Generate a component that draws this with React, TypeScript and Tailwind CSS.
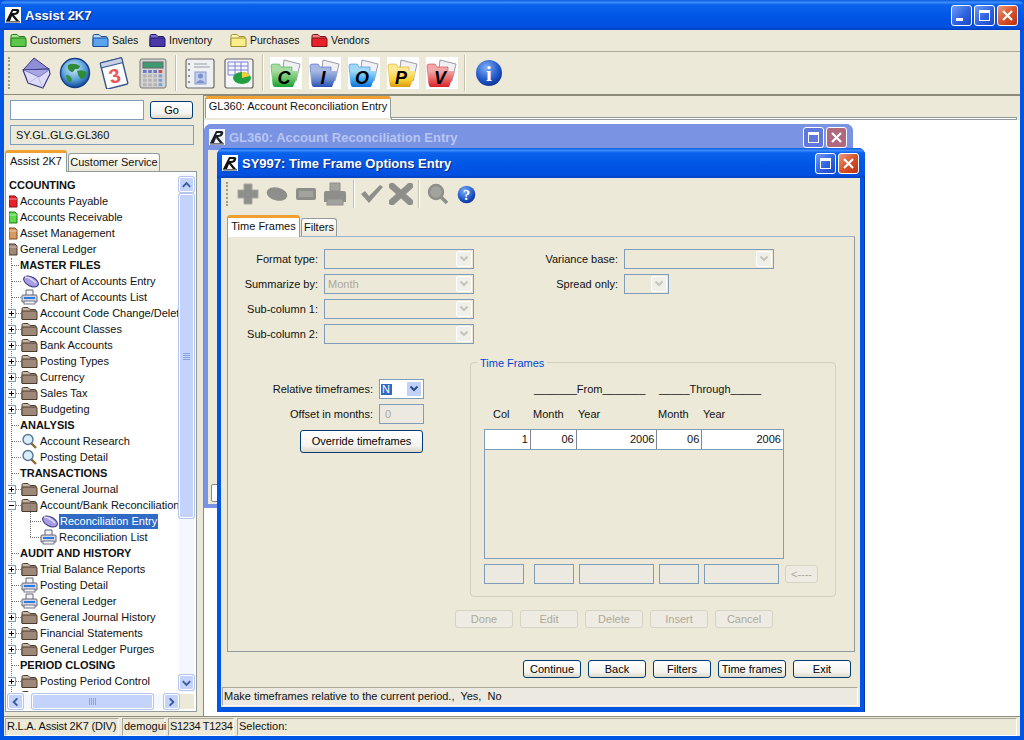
import React from 'react';

const pressed = "rounded-[3px] border border-[#003c74] bg-[linear-gradient(180deg,#ffffff_0%,#f4f3ee_70%,#dcd8c8_100%)] flex items-center justify-center text-black";

const Logo = ({ faded = false }: { faded?: boolean }) => (
  <svg width="16" height="16" viewBox="0 0 16 16" className={faded ? "shrink-0 opacity-90" : "shrink-0"}>
    <rect width="16" height="16" fill="#fff" />
    <path d="M1 14 L7 2 H12 Q15 2 14 5 Q13 8 9 8 L14 14 H11 L7 9 L5 14 Z" fill="#111" />
    <path d="M8 4 H11 Q12 4 11.5 5 Q11 6 9 6 H7.2 Z" fill="#fff" />
    <rect x="1" y="14.4" width="14" height="1" fill="#111" />
  </svg>
);

const WinButton = ({ kind, faded = false }: { kind: 'min' | 'max' | 'close'; faded?: boolean }) => {
  const bg = kind === 'close'
    ? (faded ? "bg-[#b0687e]" : "bg-[linear-gradient(135deg,#eb9a7c_0%,#d9532c_50%,#b8320f_100%)]")
    : (faded ? "bg-[#5f78dc]" : "bg-[linear-gradient(135deg,#6f9cf5_0%,#2f62e0_55%,#1d47c4_100%)]");
  return (
    <div className={`w-[21px] h-[21px] rounded-[3px] border border-white flex items-center justify-center ${bg}`}>
      <svg width="15" height="15" viewBox="0 0 15 15">
        {kind === 'min' && <rect x="2" y="10" width="7" height="3" fill="#fff" />}
        {kind === 'max' && <path d="M2 2 H13 V13 H2 Z M3 5 V12 H12 V5 Z" fill="#fff" fillRule="evenodd" />}
        {kind === 'close' && <path d="M3 3 L12 12 M12 3 L3 12" stroke="#fff" strokeWidth="2.2" />}
      </svg>
    </div>
  );
};

const Folder = ({ tab, body, line }: { tab: string; body: string; line: string }) => (
  <svg width="17" height="15" viewBox="0 0 17 15" className="shrink-0">
    <path d="M1 13 V3 Q1 1.5 2.5 1.5 H7 L9 3.5 H14 Q15 3.5 15 5 V13 Z" fill={tab} stroke={line} />
    <path d="M1 13.5 V6 Q1 5 2 5 H15 Q16 5 16 6 V13.5 Z" fill={body} stroke={line} />
  </svg>
);

const BrownFolder = () => <Folder tab="#c9b6a6" body="#a08878" line="#4a3a30" />;

const Eraser = () => (
  <svg width="18" height="16" viewBox="0 0 18 16" className="shrink-0">
    <ellipse cx="10" cy="8.5" rx="8" ry="4.5" transform="rotate(28 10 8.5)" fill="#a79be6" stroke="#3a3a80" />
    <path d="M4 4 Q9 4 15 10" stroke="#e4e0fa" strokeWidth="1.4" fill="none" />
  </svg>
);

const Printer = () => (
  <svg width="17" height="16" viewBox="0 0 17 16" className="shrink-0">
    <path d="M5 1 H12 V7 H5 Z" fill="#f4f4f8" stroke="#667" />
    <path d="M1 7 Q1 6 2 6 H15 Q16 6 16 7 V13 H1 Z" fill="#d5d8e2" stroke="#667" />
    <rect x="3" y="8" width="11" height="2" fill="#2a7ae8" />
    <rect x="3" y="12" width="11" height="3" fill="#f2f2f6" stroke="#778" />
  </svg>
);

const Magnifier = () => (
  <svg width="17" height="16" viewBox="0 0 17 16" className="shrink-0">
    <path d="M10 10 L15 15" stroke="#8a6a30" strokeWidth="2.4" />
    <circle cx="7" cy="6.5" r="5" fill="#d8eefb" stroke="#5a7590" strokeWidth="1.4" />
  </svg>
);

const Tag = ({ color, line }: { color: string; line: string }) => (
  <svg width="9" height="13" viewBox="0 0 9 13" className="shrink-0">
    <path d="M0 1 H6 L8 3 V12 H0 Z" fill={color} stroke={line} />
    <path d="M0 4 H8" stroke="#fff" strokeOpacity="0.5" />
  </svg>
);

type Row =
  | { t: 'head'; label: string; color?: undefined }
  | { t: 'cat'; label: string; color: string; line: string }
  | { t: 'sec'; label: string }
  | { t: 'leaf'; label: string; icon: 'eraser' | 'printer' | 'mag' }
  | { t: 'folder'; label: string; open?: boolean }
  | { t: 'sub'; label: string; icon: 'eraser' | 'printer'; selected?: boolean };

const rows: Row[] = [
  { t: 'head', label: 'CCOUNTING' },
  { t: 'cat', label: 'Accounts Payable', color: '#e8202a', line: '#801018' },
  { t: 'cat', label: 'Accounts Receivable', color: '#5fd84a', line: '#1d7a1d' },
  { t: 'cat', label: 'Asset Management', color: '#d89a60', line: '#7a4a20' },
  { t: 'cat', label: 'General Ledger', color: '#a08878', line: '#4a3a30' },
  { t: 'sec', label: 'MASTER FILES' },
  { t: 'leaf', label: 'Chart of Accounts Entry', icon: 'eraser' },
  { t: 'leaf', label: 'Chart of Accounts List', icon: 'printer' },
  { t: 'folder', label: 'Account Code Change/Delete' },
  { t: 'folder', label: 'Account Classes' },
  { t: 'folder', label: 'Bank Accounts' },
  { t: 'folder', label: 'Posting Types' },
  { t: 'folder', label: 'Currency' },
  { t: 'folder', label: 'Sales Tax' },
  { t: 'folder', label: 'Budgeting' },
  { t: 'sec', label: 'ANALYSIS' },
  { t: 'leaf', label: 'Account Research', icon: 'mag' },
  { t: 'leaf', label: 'Posting Detail', icon: 'mag' },
  { t: 'sec', label: 'TRANSACTIONS' },
  { t: 'folder', label: 'General Journal' },
  { t: 'folder', label: 'Account/Bank Reconciliation', open: true },
  { t: 'sub', label: 'Reconciliation Entry', icon: 'eraser', selected: true },
  { t: 'sub', label: 'Reconciliation List', icon: 'printer' },
  { t: 'sec', label: 'AUDIT AND HISTORY' },
  { t: 'folder', label: 'Trial Balance Reports' },
  { t: 'leaf', label: 'Posting Detail', icon: 'printer' },
  { t: 'leaf', label: 'General Ledger', icon: 'printer' },
  { t: 'folder', label: 'General Journal History' },
  { t: 'folder', label: 'Financial Statements' },
  { t: 'folder', label: 'General Ledger Purges' },
  { t: 'sec', label: 'PERIOD CLOSING' },
  { t: 'folder', label: 'Posting Period Control' },
  { t: 'folder', label: 'Sales Analysis' },
];

const dotH = "absolute h-0 border-t border-dotted border-[#777]";

const LeafIcon = ({ icon }: { icon: string }) =>
  icon === 'eraser' ? <Eraser /> : icon === 'printer' ? <Printer /> : <Magnifier />;

const TreeRow = ({ row }: { row: Row }) => {
  if (row.t === 'head') return <div className="h-4 flex items-center font-bold whitespace-nowrap">{row.label}</div>;
  if (row.t === 'cat') {
    return (
      <div className="h-4 flex items-center whitespace-nowrap">
        <Tag color={row.color} line={row.line} />
        <span className="ml-[2px]">{row.label}</span>
      </div>
    );
  }
  if (row.t === 'sec') {
    return (
      <div className="relative h-4 flex items-center pl-[11px] font-bold whitespace-nowrap">
        <div className={`${dotH} left-[2px] w-[8px] top-2`} />
        {row.label}
      </div>
    );
  }
  if (row.t === 'leaf') {
    return (
      <div className="relative h-4 flex items-center pl-[12px] whitespace-nowrap">
        <div className={`${dotH} left-[2px] w-[10px] top-2`} />
        <LeafIcon icon={row.icon} />
        <span className={row.icon === 'eraser' ? "ml-px" : "ml-[2px]"}>{row.label}</span>
      </div>
    );
  }
  if (row.t === 'folder') {
    return (
      <div className="relative h-4 flex items-center pl-[12px] whitespace-nowrap">
        <div className={`${dotH} left-[2px] w-[10px] top-2`} />
        <div className="absolute -left-[2px] top-[4px] w-[9px] h-[9px] border border-[#7f9db9] bg-white flex items-center justify-center">
          <div className="relative w-[5px] h-px bg-black">
            {!row.open && <div className="absolute left-[2px] -top-[2px] w-px h-[5px] bg-black" />}
          </div>
        </div>
        <BrownFolder />
        <span className="ml-[2px]">{row.label}</span>
      </div>
    );
  }
  return (
    <div className="relative h-4 flex items-center pl-[31px] whitespace-nowrap">
      <div className={`${dotH} left-[21px] w-[11px] top-2`} />
      <div className="absolute left-[21px] -top-2 h-4 border-l border-dotted border-[#777]" />
      <LeafIcon icon={row.icon} />
      <span className={row.selected ? "ml-px px-px bg-[#316ac5] text-white h-[15px] flex items-center" : "ml-[2px]"}>{row.label}</span>
    </div>
  );
};

const ScrollButton = ({ dir }: { dir: 'up' | 'down' | 'left' | 'right' }) => {
  const d = { up: "M3 9 L7 5 L11 9", down: "M3 5 L7 9 L11 5", left: "M9 3 L5 7 L9 11", right: "M5 3 L9 7 L5 11" }[dir];
  return (
    <div className="w-[15px] h-[15px] shrink-0 rounded-[2px] border border-white bg-[#c3d3fa] shadow-[0_0_0_1px_#b4c6f0] flex items-center justify-center">
      <svg width="14" height="14" viewBox="0 0 14 14"><path d={d} fill="none" stroke="#3a5a9a" strokeWidth="2" /></svg>
    </div>
  );
};

const Tree = () => (
  <div className="ml-px w-[192px] h-[541px] border border-[#919b9c] bg-white p-[2px] flex flex-col">
    <div className="flex flex-1 min-h-0">
      <div className="relative w-[172px] overflow-hidden pt-[3px] pl-px">
        <div className="absolute left-[3px] top-[84px] bottom-0 border-l border-dotted border-[#777]" />
        {rows.map((r, i) => <TreeRow key={i} row={r} />)}
      </div>
      <div className="w-[15px] ml-px pt-[3px] pb-[2px] bg-[#f4f7fe] flex flex-col items-center">
        <ScrollButton dir="up" />
        <div className="w-[15px] h-[324px] mt-[2px] rounded-[2px] border border-white bg-[#c3d3fa] shadow-[0_0_0_1px_#b4c6f0] flex items-center justify-center">
          <div className="flex flex-col gap-px">
            <div className="w-[7px] h-px bg-[#8aa4e0]" />
            <div className="w-[7px] h-px bg-[#8aa4e0]" />
            <div className="w-[7px] h-px bg-[#8aa4e0]" />
            <div className="w-[7px] h-px bg-[#8aa4e0]" />
          </div>
        </div>
        <div className="flex-1" />
        <ScrollButton dir="down" />
      </div>
    </div>
    <div className="h-[15px] mt-[2px] flex shrink-0">
      <div className="w-[171px] flex items-center bg-[#f4f7fe]">
        <ScrollButton dir="left" />
        <div className="ml-[9px] w-[121px] h-[15px] rounded-[2px] border border-white bg-[#c3d3fa] shadow-[0_0_0_1px_#b4c6f0] flex items-center justify-center gap-px">
          <div className="w-px h-[7px] bg-[#8aa4e0]" />
          <div className="w-px h-[7px] bg-[#8aa4e0]" />
          <div className="w-px h-[7px] bg-[#8aa4e0]" />
          <div className="w-px h-[7px] bg-[#8aa4e0]" />
        </div>
        <div className="flex-1" />
        <ScrollButton dir="right" />
      </div>
      <div className="flex-1 ml-px bg-[#ece9d8]" />
    </div>
  </div>
);

const LeftPanel = () => (
  <div className="w-[199px] shrink-0 pt-[5px]">
    <div className="flex pl-[6px]">
      <div className="w-[134px] h-5 border border-[#7f9db9] bg-white" />
      <div className={`${pressed} ml-[6px] w-[43px] h-[18px] mt-px`}>Go</div>
    </div>
    <div className="ml-[6px] mt-[5px] w-[184px] h-[20px] border border-[#7f9db9] bg-[#ebe9dc] flex items-center pl-[5px]">SY.GL.GLG.GL360</div>
    <div className="flex items-end mt-[5px] pl-px h-[21px]">
      <div className="relative z-10 -mb-px w-[62px] h-[22px] pb-[3px] bg-white border-x border-[#919b9c] rounded-t-[3px] border-t-[3px] border-t-[#f0a030] flex items-center justify-center">Assist 2K7</div>
      <div className="w-[92px] h-[18px] ml-px border border-b-0 border-[#919b9c] rounded-t-[3px] bg-[linear-gradient(180deg,#ffffff,#ece9d8)] flex items-center justify-center whitespace-nowrap">Customer Service</div>
    </div>
    <Tree />
  </div>
);

const MenuItem = ({ label, tab, body, line, w }: { label: string; tab: string; body: string; line: string; w: string }) => (
  <div className={`flex items-center gap-[3px] shrink-0 ${w}`}>
    <Folder tab={tab} body={body} line={line} />
    <span>{label}</span>
  </div>
);

const MenuBar = () => (
  <div className="h-[22px] flex items-center pl-[6px] border-b border-[#aca899] shrink-0 text-[10.5px]">
    <MenuItem label="Customers" tab="#a8e890" body="#5cc84a" line="#1d7a1d" w="w-[82px]" />
    <MenuItem label="Sales" tab="#b8d8fa" body="#5ba4ee" line="#1a4a9a" w="w-[57px]" />
    <MenuItem label="Inventory" tab="#7a70c8" body="#4a3aa8" line="#1c1468" w="w-[81px]" />
    <MenuItem label="Purchases" tab="#fff6b0" body="#fbee88" line="#a09030" w="w-[81px]" />
    <MenuItem label="Vendors" tab="#f08080" body="#e82028" line="#801018" w="w-[70px]" />
  </div>
);

const Envelope = () => (
  <svg width="32" height="32" viewBox="0 0 32 32">
    <path d="M3 13 L14 1 L29 12 Z" fill="#8f8cd8" stroke="#3b3a80" strokeWidth="1" />
    <path d="M3 13 L29 12 L30 17 L23 31 L8 26 Z" fill="#dedcf8" stroke="#3b3a80" strokeWidth="1.2" />
    <path d="M4 13 L19 20 L29 13" fill="#a8a5e4" stroke="#6a68b8" strokeWidth="0.8" />
    <path d="M8 26 L18 20 L23 31" fill="none" stroke="#b5b3e6" strokeWidth="0.8" />
  </svg>
);

const Globe = () => (
  <svg width="32" height="32" viewBox="0 0 32 32">
    <defs>
      <radialGradient id="gl" cx="45%" cy="35%" r="65%">
        <stop offset="0%" stopColor="#cfeaf8" />
        <stop offset="60%" stopColor="#5aa2d8" />
        <stop offset="100%" stopColor="#14489c" />
      </radialGradient>
    </defs>
    <circle cx="16" cy="16" r="14.5" fill="url(#gl)" stroke="#153f8a" strokeWidth="1.4" />
    <path d="M9 8 Q15 5 21 9 Q20 13 16 12 Q14 17 11 14 Q8 12 9 8 Z" fill="#2f8a3a" />
    <path d="M18 14 Q25 12 28 16 Q26 22 22 22 Q19 19 18 14 Z" fill="#2f8a3a" />
    <path d="M7 18 Q12 18 13 23 Q11 27 9 24 Q7 21 7 18 Z" fill="#358f40" />
  </svg>
);

const Calendar = () => (
  <svg width="32" height="32" viewBox="0 0 32 32">
    <g transform="rotate(-14 16 16)">
      <rect x="5" y="3" width="22" height="27" rx="1.5" fill="#fbfdff" stroke="#39558e" strokeWidth="1.4" />
      <rect x="5" y="3" width="22" height="5" fill="#c8d2e2" stroke="#39558e" />
      <text x="16" y="26" textAnchor="middle" fontSize="20" fontFamily="Liberation Sans" fill="#ee5555" fontWeight="bold">3</text>
    </g>
  </svg>
);

const Calculator = () => (
  <svg width="32" height="32" viewBox="0 0 32 32">
    <rect x="3" y="2" width="26" height="29" rx="2" fill="#d4d4d4" stroke="#777" />
    <rect x="6" y="5" width="20" height="6" fill="#3e9a70" stroke="#666" />
    {[0, 1, 2, 3].map(r => [0, 1, 2, 3].map(c => (
      <rect key={`${r}${c}`} x={6 + c * 5.2} y={13 + r * 4.4} width="3.6" height="3" fill={r === 0 ? (c === 3 ? '#d05050' : '#6a78c8') : c === 3 ? '#7aa0d8' : '#b4b4b4'} />
    )))}
  </svg>
);

const AddressBook = () => (
  <svg width="30" height="32" viewBox="0 0 30 32">
    <rect x="1" y="2" width="28" height="29" rx="2" fill="#eef0f2" stroke="#6a6a6a" strokeWidth="1.2" />
    <path d="M9 7 H22 M9 10 H25" stroke="#9a9aa8" />
    <path d="M4 6 V8 M4 12 V14 M4 18 V20 M4 24 V26" stroke="#777" strokeWidth="1.5" />
    <rect x="10" y="15" width="11" height="12" fill="#c0cfee" stroke="#8a9acb" />
    <circle cx="15.5" cy="19" r="2.5" fill="#7c90c8" />
    <path d="M11 26 Q15.5 20 20 26 Z" fill="#7c90c8" />
  </svg>
);

const ChartSheet = () => (
  <svg width="30" height="32" viewBox="0 0 30 32">
    <rect x="1" y="2" width="28" height="29" rx="2" fill="#f4f5f6" stroke="#666" strokeWidth="1.2" />
    <path d="M4 5 H24 V18 H4 Z M4 9 H24 M4 13 H24 M11 5 V18 M17 5 V18" fill="none" stroke="#8080d8" />
    <ellipse cx="18" cy="21" rx="9" ry="6" fill="#20a040" />
    <path d="M18 21 L18 15 Q24 15 26 19 Z" fill="#f0d040" />
  </svg>
);

const BigFolder = ({ letter, back, front, low }: { letter: string; back: string; front: string; low: string }) => (
  <div className="w-8 h-8 bg-white">
    <svg width="32" height="32" viewBox="0 0 32 32">
      <defs>
        <linearGradient id={`fold${letter}`} x1="0" y1="0" x2="0" y2="1">
          <stop offset="0%" stopColor={back} />
          <stop offset="55%" stopColor={front} />
          <stop offset="100%" stopColor={low} />
        </linearGradient>
      </defs>
      <path d="M14 3 L30 7 L26 24 L12 20 Z" fill="#f1f1f4" stroke="#9a9aa6" />
      <path d="M1 9 Q1 7 3 7 H9 L11 10 H22 L22 28 H3 Z" fill={back} stroke={low} strokeWidth="0.5" />
      <path d="M2 14 H28 Q29 14 28.5 16 L23 30 H5 Q3 30 3 28 Z" fill={`url(#fold${letter})`} />
      <text x="14" y="27" textAnchor="middle" fontSize="18" fontWeight="bold" fontStyle="italic" fontFamily="Liberation Sans" fill="#000">{letter}</text>
    </svg>
  </div>
);

const InfoIcon = ({ size, glyph }: { size: number; glyph: string }) => (
  <svg width={size} height={size} viewBox="0 0 28 28">
    <defs>
      <radialGradient id={`inf${size}`} cx="40%" cy="30%" r="75%">
        <stop offset="0%" stopColor="#7fb0f5" />
        <stop offset="65%" stopColor="#1f56c8" />
        <stop offset="100%" stopColor="#0a2f90" />
      </radialGradient>
    </defs>
    <circle cx="14" cy="14" r="13" fill={`url(#inf${size})`} />
    <text x="14" y="22" textAnchor="middle" fontSize="21" fontWeight="bold" fontFamily="Liberation Serif" fill="#fff">{glyph}</text>
  </svg>
);

const Slot = ({ children }: { children: React.ReactNode }) => (
  <div className="w-[39px] flex justify-center shrink-0">{children}</div>
);

const Gripper = ({ className }: { className: string }) => (
  <div className={`w-[2px] border-l-2 border-dotted border-[#a09c88] ${className}`} />
);

const ToolSep = ({ h, className }: { h: string; className: string }) => (
  <div className={`w-px bg-[#c4c0ac] border-r border-white box-content ${h} ${className}`} />
);

const Toolbar = () => (
  <div className="h-[43px] flex items-center pl-[4px] border-b border-[#8c8a78] shrink-0">
    <Gripper className="h-8" />
    <div className="ml-[6px] flex items-center">
      <Slot><Envelope /></Slot>
      <Slot><Globe /></Slot>
      <Slot><Calendar /></Slot>
      <Slot><Calculator /></Slot>
    </div>
    <ToolSep h="h-9" className="ml-[3px]" />
    <div className="flex items-center ml-[3px]">
      <Slot><AddressBook /></Slot>
      <Slot><ChartSheet /></Slot>
    </div>
    <ToolSep h="h-9" className="ml-[4px]" />
    <div className="flex items-center ml-[2px]">
      <Slot><BigFolder letter="C" back="#a8dca0" front="#5cc060" low="#18a030" /></Slot>
      <Slot><BigFolder letter="I" back="#a8b8e4" front="#6a88cc" low="#2a50b8" /></Slot>
      <Slot><BigFolder letter="O" back="#a0daf8" front="#40aaf0" low="#1070d8" /></Slot>
      <Slot><BigFolder letter="P" back="#fbe890" front="#f8d030" low="#d89a10" /></Slot>
      <Slot><BigFolder letter="V" back="#f0a8a8" front="#e86060" low="#d82028" /></Slot>
    </div>
    <ToolSep h="h-9" className="ml-[3px]" />
    <div className="ml-[3px] flex items-center">
      <Slot><InfoIcon size={28} glyph="i" /></Slot>
    </div>
  </div>
);

const Label = ({ w, children }: { w: string; children: React.ReactNode }) => (
  <div className={`${w} shrink-0 text-right pr-[6px] whitespace-nowrap`}>{children}</div>
);

const Chevron = ({ active = false }: { active?: boolean }) => (
  <div className={active
    ? "w-[16px] h-[16px] rounded-[2px] bg-[#c1d2fa] border border-white flex items-center justify-center"
    : "w-[16px] h-[16px] rounded-[2px] bg-[#f0efe8] border border-white flex items-center justify-center"}>
    <svg width="10" height="8" viewBox="0 0 10 8">
      <path d="M1.5 1.5 L5 5 L8.5 1.5" fill="none" stroke={active ? "#2c4a86" : "#c6c5bc"} strokeWidth="2" />
    </svg>
  </div>
);

const Select = ({ w, value }: { w: string; value?: string }) => (
  <div className={`${w} h-5 border border-[#7f9db9] bg-[#ece9d8] flex items-center justify-between pl-[3px] pr-px text-[#aca899]`}>
    <span>{value}</span>
    <Chevron />
  </div>
);

const Disabled = ({ w, children }: { w: string; children: React.ReactNode }) => (
  <div className={`${w} h-[18px] rounded-[3px] border border-[#d6d3c4] bg-[#eeece2] flex items-center justify-center text-[#aca899]`}>{children}</div>
);

const Box = ({ w, className = "" }: { w: string; className?: string }) => (
  <div className={`${w} h-5 border border-[#7f9db9] bg-[#ebe9e0] ${className}`} />
);

const Cell = ({ w, v, last = false }: { w: string; v: string; last?: boolean }) => (
  <div className={`${w} h-full flex items-center justify-end pr-[2px] ${last ? "" : "border-r border-[#7f8898]"}`}>{v}</div>
);

const TimeFrames = () => (
  <div className="relative w-[366px] h-[235px] border border-[#d3d0c0] rounded-[4px] pt-[18px]">
    <div className="absolute left-[6px] -top-[5px] px-[3px] bg-[#ece9d8] text-[#0046d5]">Time Frames</div>
    <div className="flex h-4 pl-[63px] items-center">
      <span className="w-[125px] whitespace-nowrap">_______From_______</span>
      <span className="whitespace-nowrap">_____Through_____</span>
    </div>
    <div className="flex h-4 pl-[22px] mt-[9px] items-center">
      <span className="w-[40px]">Col</span>
      <span className="w-[45px]">Month</span>
      <span className="w-[80px]">Year</span>
      <span className="w-[45px]">Month</span>
      <span>Year</span>
    </div>
    <div className="ml-[13px] mt-[7px] w-[300px] h-[130px] border border-[#7f9db9]">
      <div className="h-5 bg-white flex border-b border-[#7f9db9]">
        <Cell w="w-[46px]" v="1" />
        <Cell w="w-[46px]" v="06" />
        <Cell w="w-[81px]" v="2006" />
        <Cell w="w-[45px]" v="06" />
        <Cell w="w-[81px]" v="2006" last />
      </div>
    </div>
    <div className="flex ml-[13px] mt-[5px] items-center">
      <Box w="w-[40px]" />
      <Box w="w-[40px]" className="ml-[10px]" />
      <Box w="w-[75px]" className="ml-[5px]" />
      <Box w="w-[40px]" className="ml-[5px]" />
      <Box w="w-[75px]" className="ml-[5px]" />
      <Disabled w="w-[33px] ml-[6px]">{"<----"}</Disabled>
    </div>
  </div>
);

const TimeFrameForm = () => (
  <div className="mx-[6px] w-[628px] h-[416px] border border-[#919b9c] border-t-[#9db2cc] pt-3">
    <div className="flex flex-col gap-[5px]">
      <div className="flex items-center">
        <Label w="w-[96px]">Format type:</Label>
        <Select w="w-[150px]" />
        <Label w="w-[150px]">Variance base:</Label>
        <Select w="w-[150px]" />
      </div>
      <div className="flex items-center">
        <Label w="w-[96px]">Summarize by:</Label>
        <Select w="w-[150px]" value="Month" />
        <Label w="w-[150px]">Spread only:</Label>
        <Select w="w-[45px]" />
      </div>
      <div className="flex items-center">
        <Label w="w-[96px]">Sub-column 1:</Label>
        <Select w="w-[150px]" />
      </div>
      <div className="flex items-center">
        <Label w="w-[96px]">Sub-column 2:</Label>
        <Select w="w-[150px]" />
      </div>
    </div>
    <div className="flex mt-[18px]">
      <div className="w-[242px] pt-[17px]">
        <div className="flex items-center">
          <Label w="w-[151px]">Relative timeframes:</Label>
          <div className="w-[45px] h-5 border border-[#7f9db9] bg-white flex items-center justify-between pl-px pr-px">
            <span className="bg-[#316ac5] text-white pr-[2px] pl-px">N</span>
            <Chevron active />
          </div>
        </div>
        <div className="flex items-center mt-[5px]">
          <Label w="w-[151px]">Offset in months:</Label>
          <div className="w-[45px] h-5 border border-[#7f9db9] bg-[#ebe9e0] flex items-center pl-[5px] text-[#aca899]">0</div>
        </div>
        <div className={`${pressed} ml-[72px] mt-[6px] w-[123px] h-[23px]`}>Override timeframes</div>
      </div>
      <TimeFrames />
    </div>
    <div className="flex gap-[7px] mt-[13px] pl-[227px]">
      <Disabled w="w-[58px]">Done</Disabled>
      <Disabled w="w-[58px]">Edit</Disabled>
      <Disabled w="w-[58px]">Delete</Disabled>
      <Disabled w="w-[58px]">Insert</Disabled>
      <Disabled w="w-[58px]">Cancel</Disabled>
    </div>
  </div>
);

const gray = "#8e8e8a";

const FrontToolbar = () => (
  <div className="h-[32px] flex items-center pl-[5px] shrink-0">
    <Gripper className="h-6" />
    <div className="ml-[5px] flex items-center [&>div]:w-[29px] [&>div]:flex [&>div]:justify-center">
      <div>
        <svg width="22" height="22" viewBox="0 0 22 22"><path d="M7 1 H15 V7 H21 V15 H15 V21 H7 V15 H1 V7 H7 Z" fill={gray} stroke="#a8a8a0" /></svg>
      </div>
      <div>
        <svg width="22" height="18" viewBox="0 0 22 18"><ellipse cx="11" cy="9" rx="10.5" ry="6.5" transform="rotate(14 11 9)" fill={gray} /></svg>
      </div>
      <div>
        <svg width="22" height="14" viewBox="0 0 22 14"><rect x="1" y="1" width="20" height="12" rx="2" fill={gray} /><rect x="4" y="4" width="14" height="6" fill="#a3a39e" /></svg>
      </div>
      <div>
        <svg width="24" height="24" viewBox="0 0 24 24"><path d="M7 1 H17 V9 H7 Z" fill="#a3a39e" stroke={gray} /><path d="M1 11 Q1 9 3 9 H21 Q23 9 23 11 V20 H1 Z" fill={gray} /><rect x="4" y="17" width="16" height="6" fill="#a3a39e" stroke={gray} /></svg>
      </div>
    </div>
    <ToolSep h="h-7" className="ml-[4px]" />
    <div className="ml-[2px] flex items-center [&>div]:w-[29px] [&>div]:flex [&>div]:justify-center">
      <div>
        <svg width="24" height="20" viewBox="0 0 24 20"><path d="M1 10 L5 7 L9 12 L20 1 L23 3 L9 19 Z" fill={gray} /></svg>
      </div>
      <div>
        <svg width="24" height="22" viewBox="0 0 24 22"><path d="M3 3 L21 19 M21 3 L3 19" stroke={gray} strokeWidth="6.5" strokeLinecap="round" /></svg>
      </div>
    </div>
    <ToolSep h="h-7" className="ml-[3px]" />
    <div className="ml-[3px] flex items-center [&>div]:w-[29px] [&>div]:flex [&>div]:justify-center">
      <div>
        <svg width="22" height="22" viewBox="0 0 22 22"><path d="M13 13 L20 20" stroke={gray} strokeWidth="3.5" /><circle cx="9" cy="9" r="7" fill="#a3a39e" stroke={gray} strokeWidth="2.4" /></svg>
      </div>
      <div><InfoIcon size={19} glyph="?" /></div>
    </div>
  </div>
);

const TitleBar = ({ title, height, buttons, faded = false }: { title: string; height: string; buttons: ('min' | 'max' | 'close')[]; faded?: boolean }) => (
  <div className={`${height} shrink-0 flex items-center pl-[5px] pr-[6px] rounded-t-[7px] ${faded
    ? "bg-[#7b93e3]"
    : "bg-[linear-gradient(180deg,#0a5ae0_0%,#3b8dfb_8%,#0a62ec_16%,#0055e5_60%,#0250e0_90%,#0040c0_100%)]"}`}>
    <Logo faded={faded} />
    <span className={faded
      ? "ml-[4px] text-[13px] font-bold text-[#b7c5f2]"
      : "ml-[4px] text-[13px] font-bold text-white [text-shadow:1px_1px_0_#0a2a80]"}>{title}</span>
    <div className="flex-1" />
    <div className="flex gap-[2px]">
      {buttons.map(b => <WinButton key={b} kind={b} faded={faded} />)}
    </div>
  </div>
);

const BackWindow = () => (
  <div className="absolute left-0 top-[4px] w-[649px] h-[384px] rounded-t-[7px] bg-[#7b93e3] flex flex-col">
    <TitleBar title="GL360: Account Reconciliation Entry" height="h-[26px]" buttons={['max', 'close']} faded />
    <div className="flex-1 mx-[4px] mb-[4px] bg-[#ece9d8] flex flex-col justify-end pb-[2px] pl-[3px]">
      <div className="w-[10px] h-[18px] border border-[#8a8a84] rounded-l-[2px] bg-white" />
    </div>
  </div>
);

const FrontWindow = () => (
  <div className="absolute left-[13px] top-[28px] w-[648px] h-[564px] rounded-t-[7px] bg-[#0055e5] flex flex-col shadow-[inset_-1px_0_0_#0038b0]">
    <TitleBar title="SY997: Time Frame Options Entry" height="h-[30px]" buttons={['max', 'close']} />
    <div className="flex-1 ml-[4px] mb-[5px] mr-[5px] bg-[#ece9d8] flex flex-col">
      <FrontToolbar />
      <div className="flex items-end pl-[6px] h-[26px] shrink-0">
        <div className="relative z-10 -mb-px w-[73px] h-[22px] pb-[3px] bg-white border-x border-[#919b9c] rounded-t-[3px] border-t-[3px] border-t-[#f0a030] flex items-center justify-center">Time Frames</div>
        <div className="w-[36px] h-[18px] ml-px border border-b-0 border-[#919b9c] rounded-t-[3px] bg-[linear-gradient(180deg,#ffffff,#ece9d8)] flex items-center justify-center">Filters</div>
      </div>
      <TimeFrameForm />
      <div className="flex justify-end gap-[7px] pr-[9px] mt-[8px]">
        <div className={`${pressed} w-[58px] h-[18px]`}>Continue</div>
        <div className={`${pressed} w-[58px] h-[18px]`}>Back</div>
        <div className={`${pressed} w-[58px] h-[18px]`}>Filters</div>
        <div className={`${pressed} w-[68px] h-[18px]`}>Time frames</div>
        <div className={`${pressed} w-[58px] h-[18px]`}>Exit</div>
      </div>
      <div className="mx-px mt-[9px] w-[636px] h-[19px] border border-[#aca899] border-b-white border-r-white bg-[#ebe9e0] flex items-center pl-px whitespace-pre">
        Make timeframes relative to the current period.,  Yes,  No
      </div>
    </div>
  </div>
);

const RightPanel = () => (
  <div className="flex-1 flex flex-col min-w-0 border-l border-t border-[#8c8a78]">
    <div className="h-[24px] flex items-start pl-px shrink-0">
      <div className="relative z-10 w-[186px] h-[22px] pb-[4px] bg-white border-x border-[#919b9c] rounded-t-[3px] border-t-[3px] border-t-[#f0a030] flex items-center justify-center whitespace-nowrap">GL360: Account Reconciliation Entry</div>
      <div className="flex-1 mr-[3px] mt-[21px] h-[3px] border border-[#919b9c] bg-white" />
    </div>
    <div className="relative flex-1 bg-white">
      <BackWindow />
      <FrontWindow />
    </div>
  </div>
);

const Cellbox = ({ w, className = "", children }: { w: string; className?: string; children?: React.ReactNode }) => (
  <div className={`${w} ${className} h-[18px] shrink-0 border border-[#aca899] border-b-white border-r-white flex items-center pl-px whitespace-nowrap`}>{children}</div>
);

const StatusBar = () => (
  <div className="h-[20px] shrink-0 flex items-center gap-[3px] pl-px border-t border-[#8c8a78]">
    <Cellbox w="w-[114px]" className="tracking-[-0.2px]">R.L.A. Assist 2K7 (DIV)</Cellbox>
    <Cellbox w="w-[43px]">demogui</Cellbox>
    <Cellbox w="w-[66px]" className="tracking-[-0.3px]">S1234 T1234</Cellbox>
    <Cellbox w="w-[780px]">Selection:</Cellbox>
  </div>
);

export default function App() {
  return (
    <div className="w-[1024px] h-[740px] overflow-hidden flex flex-col bg-[#0055e5] font-['Liberation_Sans',sans-serif] text-[11px] leading-none text-[#111]">
      <TitleBar title="Assist 2K7" height="h-[30px]" buttons={['min', 'max', 'close']} />
      <div className="flex-1 min-h-0 mx-[4px] mb-[4px] bg-[#ece9d8] flex flex-col">
        <MenuBar />
        <Toolbar />
        <div className="flex-1 min-h-0 flex">
          <LeftPanel />
          <RightPanel />
        </div>
        <StatusBar />
      </div>
    </div>
  );
}
